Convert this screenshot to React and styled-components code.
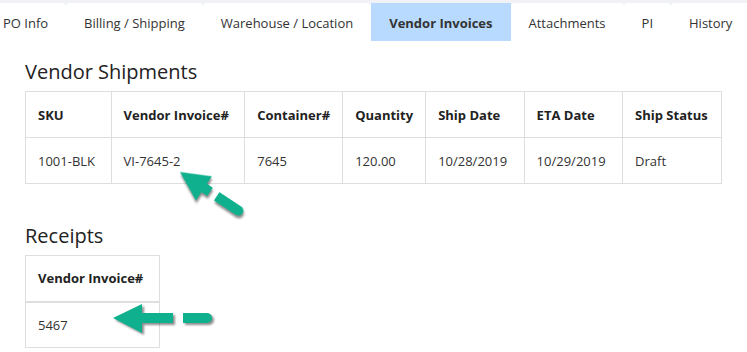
import styled, { createGlobalStyle } from 'styled-components'

const GlobalStyle = createGlobalStyle`
    body {
        margin: 0;
        background: #fff;
        font-family: "Open Sans", "Noto Sans", sans-serif;
        color: #333;
    }
`

const Page = styled.div`
    position: relative;
    width: 747px;
    height: 352px;
    overflow: hidden;
`

const TabBar = styled.div`
    display: flex;
    background: #f1f2f6;
    padding-top: 3px;
    margin-left: -15px;
`

const Tab = styled.div`
    height: 38px;
    display: flex;
    align-items: center;
    padding: 1px 18px 0;
    box-sizing: border-box;
    font-size: 13px;
    white-space: nowrap;
    color: #333;
    font-weight: ${p => (p.active ? 700 : 400)};
    background: ${p => (p.active ? '#b8dafe' : '#fff')};
    border-radius: ${p => (p.active ? '0' : '4px 4px 0 0')};
`

const Content = styled.div`
    padding: 0 25px;
`

const Heading = styled.h2`
    margin: ${p => p.top}px 0 5px;
    font-size: 20px;
    line-height: 28px;
    font-weight: 400;
    color: #222;
`

const Table = styled.table`
    border-collapse: collapse;
    table-layout: fixed;
    font-size: 13px;
`

const Th = styled.th`
    box-sizing: border-box;
    width: ${p => p.w}px;
    height: 46px;
    padding: 0 12px;
    text-align: left;
    font-weight: 700;
    color: #222;
    border: 1px solid #dedede;
    border-bottom-width: ${p => (p.thick ? 2 : 1)}px;
    white-space: nowrap;
`

const Td = styled.td`
    box-sizing: border-box;
    height: 46px;
    padding: 0 12px;
    border: 1px solid #dedede;
    color: #333;
    white-space: nowrap;
`

const ArrowWrap = styled.div`
    position: absolute;
    left: ${p => p.x - 2}px;
    top: ${p => p.y - 20}px;
    width: 110px;
    height: 40px;
    transform-origin: 2px 20px;
    transform: rotate(${p => p.angle}deg);
    filter: drop-shadow(2px 2px 1px rgba(0, 0, 0, 0.45));
`

function Arrow({ x, y, angle, shaftEnd, dashStart, dashEnd }) {
    return (
        <ArrowWrap x={x} y={y} angle={angle}>
            <svg width="110" height="40" viewBox="0 0 110 40">
                <g fill="#0eb08d">
                    <polygon points="2,20 31,6 31,35" />
                    <rect x="30" y="15" width={shaftEnd - 30} height="10" />
                    <path d={`M${dashStart} 15 H${dashEnd - 5} A5 5 0 0 1 ${dashEnd - 5} 25 H${dashStart} Z`} />
                </g>
            </svg>
        </ArrowWrap>
    )
}

const tabs = ['PO Info', 'Billing / Shipping', 'Warehouse / Location', 'Vendor Invoices', 'Attachments', 'PI', 'History']

const columns = [
    ['SKU', 86],
    ['Vendor Invoice#', 134],
    ['Container#', 98],
    ['Quantity', 82],
    ['Ship Date', 99],
    ['ETA Date', 99],
    ['Ship Status', 99],
]

const row = ['1001-BLK', 'VI-7645-2', '7645', '120.00', '10/28/2019', '10/29/2019', 'Draft']

function App() {
    return (
        <Page>
            <GlobalStyle />
            <TabBar>
                {tabs.map(t => (
                    <Tab key={t} active={t === 'Vendor Invoices'}>{t}</Tab>
                ))}
            </TabBar>
            <Content>
                <Heading top={17}>Vendor Shipments</Heading>
                <Table>
                    <thead>
                        <tr>
                            {columns.map(([name, w]) => (
                                <Th key={name} w={w}>{name}</Th>
                            ))}
                        </tr>
                    </thead>
                    <tbody>
                        <tr>
                            {row.map(v => (
                                <Td key={v}>{v}</Td>
                            ))}
                        </tr>
                    </tbody>
                </Table>

                <Heading top={38}>Receipts</Heading>
                <Table>
                    <thead>
                        <tr>
                            <Th w={134} thick>Vendor Invoice#</Th>
                        </tr>
                    </thead>
                    <tbody>
                        <tr>
                            <Td>5467</Td>
                        </tr>
                    </tbody>
                </Table>
            </Content>

            <Arrow x={180} y={172} angle={33.5} shaftEnd={38} dashStart={46} dashEnd={77} />
            <Arrow x={113} y={318} angle={0} shaftEnd={62} dashStart={72} dashEnd={101} />
        </Page>
    )
}

export default App
